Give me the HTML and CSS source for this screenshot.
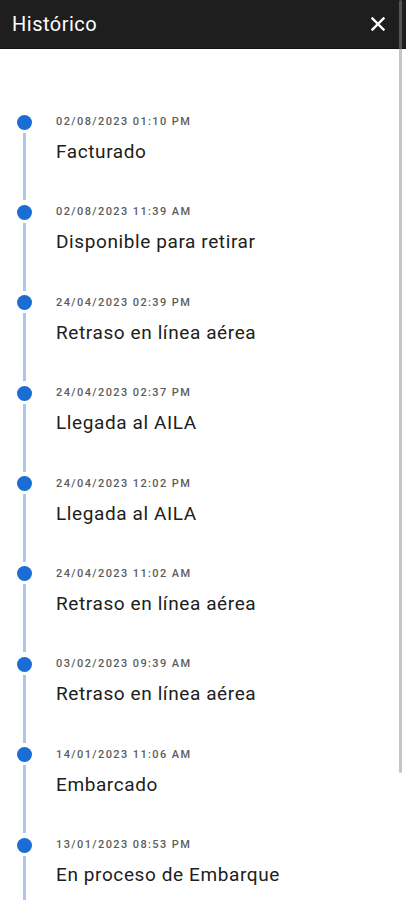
FILE: index.html
```html
<!DOCTYPE html>
<html lang="es">
<head>
  <meta charset="UTF-8" />
  <meta name="viewport" content="width=device-width, initial-scale=1.0"/>
  <title>Histórico</title>
  <link rel="stylesheet" href="styles.css">
</head>
<body>
  <header class="top-bar">
    <h1>Histórico</h1>
    <a class="close-button" href="#" aria-label="Cerrar">
      <svg width="14" height="14" viewBox="0 0 14 14">
        <path d="M1.5 1.5 L12.5 12.5 M12.5 1.5 L1.5 12.5" stroke="#fff" stroke-width="2.4" stroke-linecap="square"/>
      </svg>
    </a>
  </header>

  <ul class="timeline">
    <li class="event">
      <div class="marker"><span class="dot"></span><span class="line"></span></div>
      <div class="info"><span class="date">02/08/2023 01:10 PM</span><span class="status">Facturado</span></div>
    </li>
    <li class="event">
      <div class="marker"><span class="dot"></span><span class="line"></span></div>
      <div class="info"><span class="date">02/08/2023 11:39 AM</span><span class="status">Disponible para retirar</span></div>
    </li>
    <li class="event">
      <div class="marker"><span class="dot"></span><span class="line"></span></div>
      <div class="info"><span class="date">24/04/2023 02:39 PM</span><span class="status">Retraso en línea aérea</span></div>
    </li>
    <li class="event">
      <div class="marker"><span class="dot"></span><span class="line"></span></div>
      <div class="info"><span class="date">24/04/2023 02:37 PM</span><span class="status">Llegada al AILA</span></div>
    </li>
    <li class="event">
      <div class="marker"><span class="dot"></span><span class="line"></span></div>
      <div class="info"><span class="date">24/04/2023 12:02 PM</span><span class="status">Llegada al AILA</span></div>
    </li>
    <li class="event">
      <div class="marker"><span class="dot"></span><span class="line"></span></div>
      <div class="info"><span class="date">24/04/2023 11:02 AM</span><span class="status">Retraso en línea aérea</span></div>
    </li>
    <li class="event">
      <div class="marker"><span class="dot"></span><span class="line"></span></div>
      <div class="info"><span class="date">03/02/2023 09:39 AM</span><span class="status">Retraso en línea aérea</span></div>
    </li>
    <li class="event">
      <div class="marker"><span class="dot"></span><span class="line"></span></div>
      <div class="info"><span class="date">14/01/2023 11:06 AM</span><span class="status">Embarcado</span></div>
    </li>
    <li class="event">
      <div class="marker"><span class="dot"></span><span class="line"></span></div>
      <div class="info"><span class="date">13/01/2023 08:53 PM</span><span class="status">En proceso de Embarque</span></div>
    </li>
  </ul>

  <div class="scroll-thumb"></div>
</body>
</html>
```

FILE: styles.css
```css
* {
  margin: 0;
  padding: 0;
  box-sizing: border-box;
}

body {
  background: #fff;
  font-family: Roboto, 'Liberation Sans', sans-serif;
  height: 900px;
  overflow: hidden;
  color: #222;
}

.top-bar {
  height: 49px;
  background: #1e1e1e;
  border-bottom: 1px solid #141414;
  display: flex;
  align-items: center;
  justify-content: space-between;
  padding: 0 21px 0 12px;
}

.top-bar h1 {
  color: #fff;
  font-size: 20px;
  font-weight: 400;
  letter-spacing: 0.5px;
}

.close-button {
  display: flex;
  align-items: center;
  justify-content: center;
  width: 14px;
  height: 14px;
}

.timeline {
  list-style: none;
  padding-top: 65px;
}

.event {
  display: flex;
  height: 90.375px;
}

.marker {
  width: 48px;
  display: flex;
  flex-direction: column;
  align-items: center;
}

.dot {
  width: 15px;
  height: 15px;
  margin-top: 0.5px;
  border-radius: 50%;
  background: #1a6dd2;
  flex-shrink: 0;
}

.line {
  flex: 1;
  width: 3px;
  margin: 3px 0 4px;
  background: #a8c8ef;
}

.event:last-child {
  height: 200px;
}

.info {
  margin-left: 8px;
  display: flex;
  flex-direction: column;
}

.date {
  font-size: 11px;
  line-height: 16px;
  letter-spacing: 1.4px;
  color: #5c5c5c;
  font-weight: 500;
}

.status {
  margin-top: 10px;
  font-size: 19px;
  line-height: 24px;
  letter-spacing: 0.6px;
  color: #202020;
}

.scroll-thumb {
  position: fixed;
  top: 0;
  left: 399px;
  width: 3px;
  height: 773px;
  border-radius: 2px;
  background: rgba(140, 140, 140, 0.5);
}
```
